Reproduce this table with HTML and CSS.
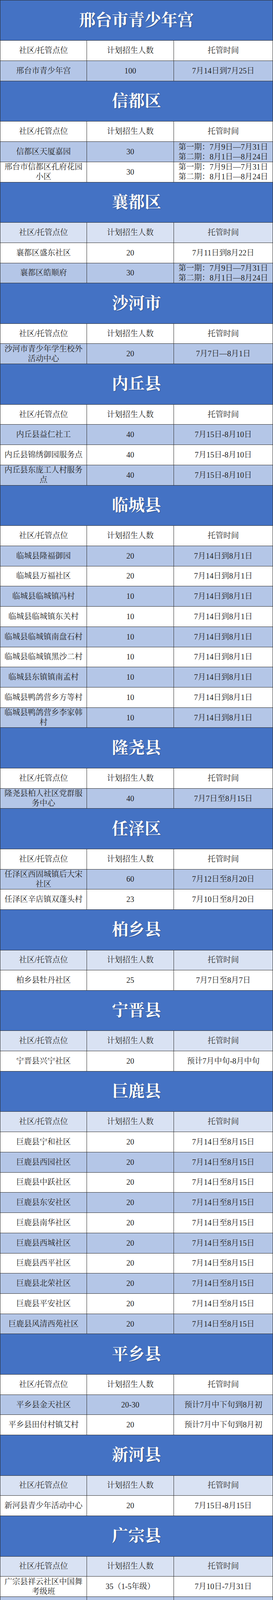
FILE: index.html
```html
<!DOCTYPE html>
<html lang="zh-CN">
<head>
<meta charset="utf-8">
<title>邢台市暑期托管点位</title>
<link rel="stylesheet" href="styles.css">
</head>
<body>
<div class="sheet">
<div class="band">邢台市青少年宫</div>
<div class="row"><div class="cell">社区/托管点位</div><div class="cell">计划招生人数</div><div class="cell">托管时间</div></div>
<div class="row b"><div class="cell">邢台市青少年宫</div><div class="cell">100</div><div class="cell">7月14日到7月25日</div></div>

<div class="band">信都区</div>
<div class="row"><div class="cell">社区/托管点位</div><div class="cell">计划招生人数</div><div class="cell">托管时间</div></div>
<div class="row b"><div class="cell">信都区天厦嘉园</div><div class="cell">30</div><div class="cell two">第一期：7月9日—7月31日<br>第二期：8月1日—8月24日</div></div>
<div class="row"><div class="cell">邢台市信都区孔府花园小区</div><div class="cell">30</div><div class="cell two">第一期：7月9日—7月31日<br>第二期：8月1日—8月24日</div></div>

<div class="band">襄都区</div>
<div class="row lt"><div class="cell">社区/托管点位</div><div class="cell">计划招生人数</div><div class="cell">托管时间</div></div>
<div class="row"><div class="cell">襄都区盛东社区</div><div class="cell">20</div><div class="cell">7月11日到8月22日</div></div>
<div class="row b"><div class="cell">襄都区皓顺府</div><div class="cell">30</div><div class="cell two">第一期：7月9日—7月31日<br>第二期：8月1日—8月24日</div></div>

<div class="band">沙河市</div>
<div class="row"><div class="cell">社区/托管点位</div><div class="cell">计划招生人数</div><div class="cell">托管时间</div></div>
<div class="row b"><div class="cell">沙河市青少年学生校外活动中心</div><div class="cell">20</div><div class="cell">7月7日—8月1日</div></div>

<div class="band">内丘县</div>
<div class="row"><div class="cell">社区/托管点位</div><div class="cell">计划招生人数</div><div class="cell">托管时间</div></div>
<div class="row b"><div class="cell">内丘县益仁社工</div><div class="cell">40</div><div class="cell">7月15日-8月10日</div></div>
<div class="row"><div class="cell">内丘县锦绣御园服务点</div><div class="cell">40</div><div class="cell">7月15日-8月10日</div></div>
<div class="row b"><div class="cell">内丘县东庞工人村服务点</div><div class="cell">40</div><div class="cell">7月15日-8月10日</div></div>

<div class="band">临城县</div>
<div class="row"><div class="cell">社区/托管点位</div><div class="cell">计划招生人数</div><div class="cell">托管时间</div></div>
<div class="row b"><div class="cell">临城县隆福御园</div><div class="cell">20</div><div class="cell">7月14日到8月1日</div></div>
<div class="row"><div class="cell">临城县万福社区</div><div class="cell">20</div><div class="cell">7月14日到8月1日</div></div>
<div class="row b"><div class="cell">临城县临城镇冯村</div><div class="cell">10</div><div class="cell">7月14日到8月1日</div></div>
<div class="row"><div class="cell">临城县临城镇东关村</div><div class="cell">10</div><div class="cell">7月14日到8月1日</div></div>
<div class="row b"><div class="cell">临城县临城镇南盘石村</div><div class="cell">10</div><div class="cell">7月14日到8月1日</div></div>
<div class="row"><div class="cell">临城县临城镇黑沙二村</div><div class="cell">10</div><div class="cell">7月14日到8月1日</div></div>
<div class="row b"><div class="cell">临城县东镇镇南孟村</div><div class="cell">10</div><div class="cell">7月14日到8月1日</div></div>
<div class="row"><div class="cell">临城县鸭鸽营乡方等村</div><div class="cell">10</div><div class="cell">7月14日到8月1日</div></div>
<div class="row b"><div class="cell">临城县鸭鸽营乡李家韩村</div><div class="cell">10</div><div class="cell">7月14日到8月1日</div></div>

<div class="band">隆尧县</div>
<div class="row"><div class="cell">社区/托管点位</div><div class="cell">计划招生人数</div><div class="cell">托管时间</div></div>
<div class="row b"><div class="cell">隆尧县柏人社区党群服务中心</div><div class="cell">40</div><div class="cell">7月7日至8月15日</div></div>

<div class="band">任泽区</div>
<div class="row"><div class="cell">社区/托管点位</div><div class="cell">计划招生人数</div><div class="cell">托管时间</div></div>
<div class="row b"><div class="cell">任泽区西固城镇后大宋社区</div><div class="cell">60</div><div class="cell">7月12日至8月20日</div></div>
<div class="row"><div class="cell">任泽区辛店镇双蓬头村</div><div class="cell">23</div><div class="cell">7月10日至8月20日</div></div>

<div class="band">柏乡县</div>
<div class="row lt"><div class="cell">社区/托管点位</div><div class="cell">计划招生人数</div><div class="cell">托管时间</div></div>
<div class="row"><div class="cell">柏乡县牡丹社区</div><div class="cell">25</div><div class="cell">7月7日至8月7日</div></div>

<div class="band">宁晋县</div>
<div class="row lt"><div class="cell">社区/托管点位</div><div class="cell">计划招生人数</div><div class="cell">托管时间</div></div>
<div class="row"><div class="cell">宁晋县兴宁社区</div><div class="cell">20</div><div class="cell">预计7月中旬-8月中旬</div></div>

<div class="band">巨鹿县</div>
<div class="row lt"><div class="cell">社区/托管点位</div><div class="cell">计划招生人数</div><div class="cell">托管时间</div></div>
<div class="row"><div class="cell">巨鹿县宁和社区</div><div class="cell">20</div><div class="cell">7月14日至8月15日</div></div>
<div class="row b"><div class="cell">巨鹿县西园社区</div><div class="cell">20</div><div class="cell">7月14日至8月15日</div></div>
<div class="row"><div class="cell">巨鹿县中跃社区</div><div class="cell">20</div><div class="cell">7月14日至8月15日</div></div>
<div class="row b"><div class="cell">巨鹿县东安社区</div><div class="cell">20</div><div class="cell">7月14日至8月15日</div></div>
<div class="row"><div class="cell">巨鹿县南华社区</div><div class="cell">20</div><div class="cell">7月14日至8月15日</div></div>
<div class="row b"><div class="cell">巨鹿县西城社区</div><div class="cell">20</div><div class="cell">7月14日至8月15日</div></div>
<div class="row"><div class="cell">巨鹿县西平社区</div><div class="cell">20</div><div class="cell">7月14日至8月15日</div></div>
<div class="row b"><div class="cell">巨鹿县北荣社区</div><div class="cell">20</div><div class="cell">7月14日至8月15日</div></div>
<div class="row"><div class="cell">巨鹿县平安社区</div><div class="cell">20</div><div class="cell">7月14日至8月15日</div></div>
<div class="row b"><div class="cell">巨鹿县风清西苑社区</div><div class="cell">20</div><div class="cell">7月14日至8月15日</div></div>

<div class="band">平乡县</div>
<div class="row"><div class="cell">社区/托管点位</div><div class="cell">计划招生人数</div><div class="cell">托管时间</div></div>
<div class="row b"><div class="cell">平乡县金天社区</div><div class="cell">20-30</div><div class="cell">预计7月中下旬到8月初</div></div>
<div class="row"><div class="cell">平乡县田付村镇艾村</div><div class="cell">20</div><div class="cell">预计7月中下旬到8月初</div></div>

<div class="band">新河县</div>
<div class="row lt"><div class="cell">社区/托管点位</div><div class="cell">计划招生人数</div><div class="cell">托管时间</div></div>
<div class="row"><div class="cell">新河县青少年活动中心</div><div class="cell">20</div><div class="cell">7月15日-8月15日</div></div>

<div class="band">广宗县</div>
<div class="row lt"><div class="cell">社区/托管点位</div><div class="cell">计划招生人数</div><div class="cell">托管时间</div></div>
<div class="row"><div class="cell">广宗县祥云社区中国舞考级班</div><div class="cell">35（1-5年级）</div><div class="cell">7月10日-7月31日</div></div>
<div class="row b"><div class="cell">广宗县祥云社区拉丁舞</div><div class="cell">35（1-6年级）</div><div class="cell">7月10日-7月31日</div></div>
<div class="row"><div class="cell">广宗县祥云社区少儿歌曲考级班</div><div class="cell">35（1-6年级）</div><div class="cell">7月10日-7月31日</div></div>
<div class="row b"><div class="cell span2">广宗县祥云社区美术二级考级班</div><div class="cell">30</div><div class="cell">7月10日-7月31日</div></div>
<div class="row"><div class="cell">30</div><div class="cell">7月10日-7月31日</div></div>
<div class="row b"><div class="cell span5 bgw">广宗县祥云社区美术一级考级班</div><div class="cell">30（2-5年级）</div><div class="cell">7月10日-7月31日</div></div>
<div class="row"><div class="cell">30（2-5年级）</div><div class="cell">7月10日-7月31日</div></div>
<div class="row b"><div class="cell">30（2-5年级）</div><div class="cell">7月10日-7月31日</div></div>
<div class="row"><div class="cell">30（2-5年级）</div><div class="cell">7月10日-7月31日</div></div>
<div class="row b"><div class="cell">30（2-5年级）</div><div class="cell">7月10日-7月31日</div></div>
<div class="row"><div class="cell span2 bgb">广宗县祥云社区少儿轮滑</div><div class="cell">20（2-3年级）</div><div class="cell">7月10日-7月31日</div></div>
<div class="row b"><div class="cell">20（2-3年级）</div><div class="cell">7月10日-7月31日</div></div>
<div class="row"><div class="cell">广宗县祥云社区乒乓球</div><div class="cell">30（2-5年级）</div><div class="cell">7月10日-7月31日</div></div>
<div class="row b"><div class="cell">广宗县祥云社区茶艺</div><div class="cell">20（1-6年级）</div><div class="cell">7月10日-7月31日</div></div>
<div class="row"><div class="cell span2">广宗县祥云社区古筝考级班</div><div class="cell">18（2-5年级）</div><div class="cell">7月10日-7月31日</div></div>
<div class="row b"><div class="cell">18（2-5年级）</div><div class="cell">7月10日-7月31日</div></div>
<div class="row"><div class="cell">广宗县祥云社区硬笔考级班</div><div class="cell">20（2-3年级）</div><div class="cell">7月10日-7月31日</div></div>
<div class="row b"><div class="cell">广宗县祥云社区电子琴</div><div class="cell">15（2-5年级）</div><div class="cell">7月10日-7月31日</div></div>

<div class="band">威县</div>
<div class="row"><div class="cell">社区/托管点位</div><div class="cell">计划招生人数</div><div class="cell">托管时间</div></div>
<div class="row b"><div class="cell">威县朝阳社区</div><div class="cell">8</div><div class="cell">7月15日-8月15日</div></div>

<div class="band">临西县</div>
<div class="row"><div class="cell">社区/托管点位</div><div class="cell">计划招生人数</div><div class="cell">托管时间</div></div>
<div class="row b"><div class="cell">临西县阳光社区</div><div class="cell">20</div><div class="cell">7月14日-8月22日</div></div>
<div class="row"><div class="cell">临西县珠江社区</div><div class="cell">35</div><div class="cell">7月14日-8月22日</div></div>
<div class="row b"><div class="cell">临西县北湖社区</div><div class="cell">30</div><div class="cell">7月14日-8月22日</div></div>

<div class="band">清河县</div>
<div class="row"><div class="cell">社区/托管点位</div><div class="cell">计划招生人数</div><div class="cell">托管时间</div></div>
<div class="row b"><div class="cell">清河县邱家那社区</div><div class="cell">30</div><div class="cell">7月8日—7月28日</div></div>
</div>
</body>
</html>
```

FILE: styles.css
```css
* { box-sizing: border-box; }
html, body { margin: 0; padding: 0; background: #ffffff; }
body {
  width: 700px;
  height: 5693px;
  overflow: hidden;
  font-family: "Liberation Serif", "Noto Serif CJK SC", "AR PL UMing CN", "Noto Sans CJK SC", serif;
}
.sheet {
  display: grid;
  width: 700px;
  grid-template-columns: 221px 222px 253px;
  grid-auto-rows: 50.745px;
  gap: 1px;
  padding: 1px;
  background: #2b2b2b;
}
.row { display: contents; }
.cell {
  display: flex;
  align-items: center;
  justify-content: center;
  text-align: center;
  padding: 0 4px;
  overflow: hidden;
  background: #ffffff;
  color: #1e1e1e;
  font-size: 20px;
  line-height: 25px;
}
.row.b > .cell { background: #b4c6e7; }
.row.lt > .cell { background: #d9e2f3; color: #2a2a2a; }
.row > .cell.bgw { background: #ffffff; }
.row > .cell.bgb { background: #b4c6e7; }
.span2 { grid-row: span 2; }
.span5 { grid-row: span 5; }
.two { white-space: nowrap; padding: 0 2px; }
.band {
  grid-column: 1 / -1;
  grid-row: span 2;
  display: flex;
  align-items: center;
  justify-content: center;
  background: #4472c4;
  color: #ffffff;
  font-size: 42px;
  font-weight: bold;
  line-height: 50px;
  text-shadow: 1px 1px 2px rgba(0, 0, 0, 0.35);
}
```
